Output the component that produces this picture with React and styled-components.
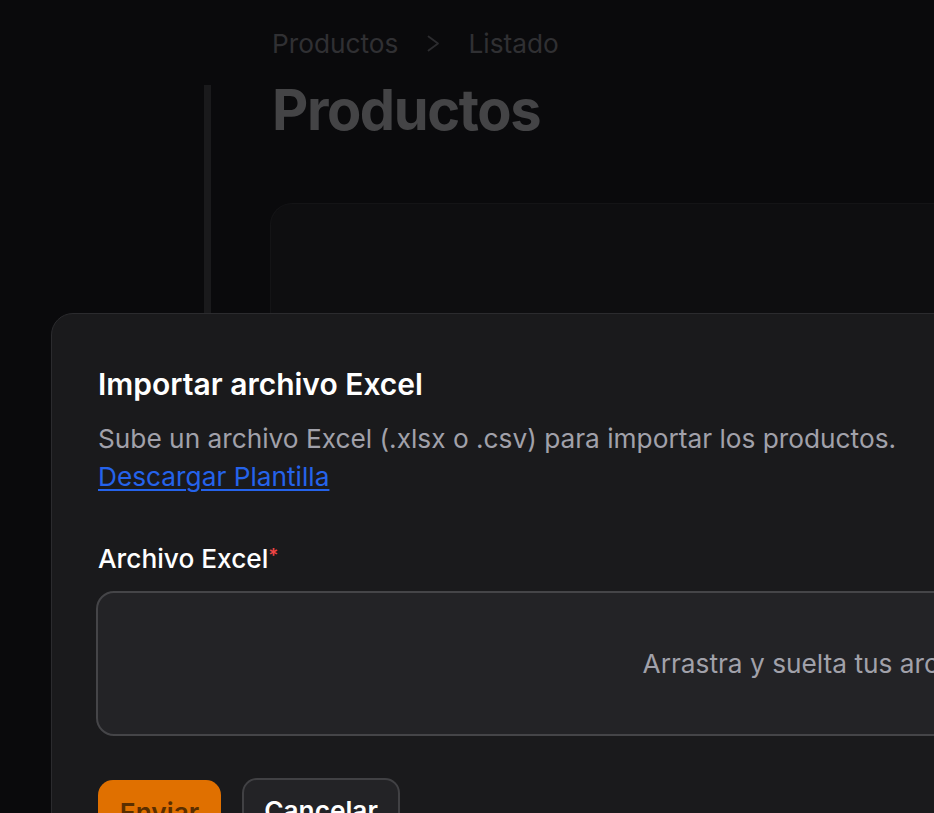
import React from 'react';
import styled, { createGlobalStyle } from 'styled-components';

const GlobalStyle = createGlobalStyle`
	html, body {
		margin: 0;
		padding: 0;
		height: 100%;
		overflow: hidden;
		background: #0a0a0c;
		font-family: Inter, "Noto Sans", sans-serif;
	}
	#root {
		height: 100%;
	}
`;

const Screen = styled.div`
	position: relative;
	width: 934px;
	height: 813px;
	overflow: hidden;
	background: #0a0a0c;
`;

const Layout = styled.div`
	display: flex;
	height: 100%;
`;

const Sidebar = styled.aside`
	width: 204px;
	flex-shrink: 0;
`;

const Rail = styled.div`
	width: 7px;
	margin-top: 85px;
	background: #1a1a1c;
	flex-shrink: 0;
`;

const Main = styled.main`
	flex: 1;
	padding: 25px 0 0 61px;
	display: flex;
	flex-direction: column;
`;

const Breadcrumbs = styled.nav`
	display: flex;
	align-items: center;
	gap: 28px;
	font-size: 26.25px;
	line-height: 37.5px;
	color: #303033;
`;

const Chevron = styled.svg`
	width: 14px;
	height: 17px;
	color: #2c2c2f;
`;

const PageTitle = styled.h1`
	margin: 14px 0 0;
	font-size: 56px;
	line-height: 67.5px;
	font-weight: 700;
	letter-spacing: -0.025em;
	color: #444446;
`;

const Card = styled.section`
	margin: 59px 0 0 -2px;
	height: 400px;
	border-radius: 22px 0 0 0;
	background: #0e0e10;
	border: 1px solid #141416;
	border-right: none;
`;

const Modal = styled.div`
	position: absolute;
	left: 51px;
	top: 313px;
	width: 1690px;
	height: 800px;
	box-sizing: border-box;
	padding: 48px 44px;
	background: #1a1a1c;
	border: 1px solid #2b2b2e;
	border-radius: 22px;
	display: flex;
	flex-direction: column;
`;

const Header = styled.header`
	display: flex;
	flex-direction: column;
	gap: 13px;
	padding-left: 2px;
`;

const Heading = styled.h2`
	margin: 0;
	font-size: 30px;
	line-height: 45px;
	font-weight: 600;
	color: #ffffff;
`;

const Description = styled.p`
	margin: 0;
	font-size: 26.25px;
	line-height: 37.5px;
	color: #a1a1aa;
`;

const TemplateLink = styled.a`
	color: #2563eb;
	text-decoration: underline;
	text-underline-offset: 3px;
	text-decoration-thickness: 2px;
`;

const Field = styled.div`
	margin-top: 45px;
	display: flex;
	flex-direction: column;
	gap: 13px;
`;

const Label = styled.label`
	padding-left: 2px;
	font-size: 26.25px;
	line-height: 37.5px;
	font-weight: 500;
	color: #ffffff;
`;

const Required = styled.sup`
	color: #ef4444;
	font-size: 19px;
	font-weight: 600;
	margin-left: 0;
	vertical-align: 6px;
	line-height: 0;
`;

const Dropzone = styled.div`
	height: 145px;
	box-sizing: border-box;
	display: flex;
	align-items: center;
	justify-content: center;
	background: #232326;
	border: 2px solid #454548;
	border-radius: 18px;
	font-size: 26.25px;
	color: #a1a1aa;
`;

const Browse = styled.span`
	text-decoration: underline;
	text-underline-offset: 3px;
`;

const Actions = styled.div`
	margin-top: 42px;
	padding-left: 2px;
	display: flex;
	align-items: flex-start;
	gap: 21px;
`;

const Button = styled.button`
	height: 66px;
	width: ${ ( { $primary } ) => ( $primary ? '123px' : '158px' ) };
	padding: 0;
	margin-top: ${ ( { $primary } ) => ( $primary ? '2px' : '0' ) };
	box-sizing: border-box;
	border-radius: 15px;
	font-family: Inter, sans-serif;
	font-size: 26.25px;
	font-weight: 600;
	background: ${ ( { $primary } ) => ( $primary ? '#e07000' : '#232326' ) };
	color: ${ ( { $primary } ) => ( $primary ? '#5a2e00' : '#ffffff' ) };
	border: ${ ( { $primary } ) => ( $primary ? 'none' : '2px solid #414144' ) };
`;

export default function App() {
	return (
		<Screen>
			<GlobalStyle />
			<Layout>
				<Sidebar />
				<Rail />
				<Main>
					<Breadcrumbs>
						<span>Productos</span>
						<Chevron viewBox="0 0 14 17" fill="none" stroke="currentColor" strokeWidth="1.8" strokeLinecap="round" strokeLinejoin="round">
							<path d="M2.5 1.5L12 8.5L2.5 15.5" />
						</Chevron>
						<span>Listado</span>
					</Breadcrumbs>
					<PageTitle>Productos</PageTitle>
					<Card />
				</Main>
			</Layout>
			<Modal role="dialog">
				<Header>
					<Heading>Importar archivo Excel</Heading>
					<Description>
						Sube un archivo Excel (.xlsx o .csv) para importar los productos.
						<br />
						<TemplateLink href="#">Descargar Plantilla</TemplateLink>
					</Description>
				</Header>
				<Field>
					<Label>
						Archivo Excel<Required>*</Required>
					</Label>
					<Dropzone>
						<span>
							Arrastra y suelta tus archivos o <Browse>Examinar</Browse>
						</span>
					</Dropzone>
				</Field>
				<Actions>
					<Button $primary>Enviar</Button>
					<Button>Cancelar</Button>
				</Actions>
			</Modal>
		</Screen>
	);
}
